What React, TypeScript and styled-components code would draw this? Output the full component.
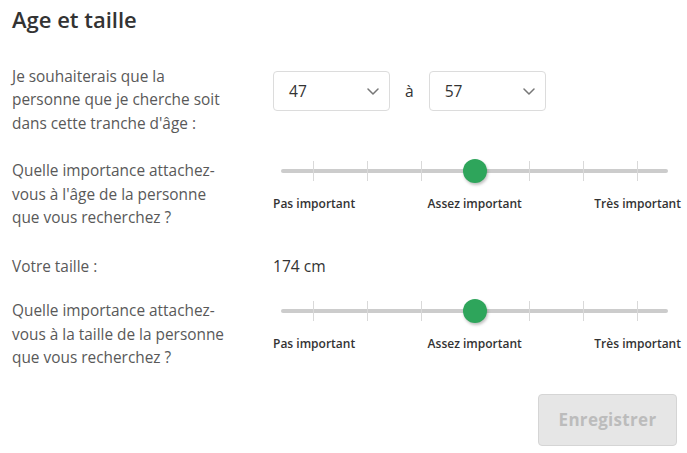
import React from "react";
import styled, { createGlobalStyle } from "styled-components";

const Global = createGlobalStyle`
  html, body { margin: 0; padding: 0; background: #ffffff; }
  body { font-family: "Open Sans", "Liberation Sans", sans-serif; }
`;

const Page = styled.div`
  padding: 0 10px 0 12px;
  width: 687px;
  box-sizing: border-box;
`;

const Title = styled.h2`
  margin: 6px 0 0 0;
  font-size: 22px;
  line-height: 27px;
  font-weight: 600;
  color: #333333;
`;

const Row = styled.div<{ $top: number }>`
  display: grid;
  grid-template-columns: 261px 1fr;
  margin-top: ${(p) => p.$top}px;
`;

const Label = styled.div`
  padding-right: 12px;
  font-size: 15.4px;
  line-height: 23.4px;
  color: #595959;
  white-space: nowrap;
`;

const Field = styled.div<{ $pad?: number }>`
  padding-top: ${(p) => p.$pad ?? 0}px;
  display: flex;
  flex-direction: column;
`;

const SelectGroup = styled.div`
  display: flex;
  align-items: center;
  gap: 15px;
  font-size: 15.6px;
  color: #333333;
`;

const SelectBox = styled.div`
  box-sizing: border-box;
  width: 117px;
  height: 40px;
  border: 1px solid #dcdcdc;
  border-radius: 4px;
  display: flex;
  align-items: center;
  justify-content: space-between;
  padding: 0 10px 0 15px;
  font-size: 15.6px;
  color: #333333;
  background: #fff;
`;

const Value = styled.div`
  font-size: 15.6px;
  line-height: 23.4px;
  color: #333333;
`;

const SliderWrap = styled.div`
  width: 408px;
  display: flex;
  flex-direction: column;
`;

const TrackArea = styled.div`
  position: relative;
  margin-left: 8px;
  width: 387px;
  height: 20px;
`;

const Track = styled.div`
  position: absolute;
  left: 0;
  right: 0;
  top: 8px;
  height: 4px;
  border-radius: 2px;
  background: #cccccc;
`;

const Tick = styled.div`
  position: absolute;
  top: 0;
  width: 1px;
  height: 20px;
  background: #d9d9d9;
`;

const Thumb = styled.div`
  position: absolute;
  top: -2px;
  width: 24px;
  height: 24px;
  margin-left: -12px;
  border-radius: 50%;
  background: #2ea55b;
  box-shadow: 1px 2px 3px rgba(0, 0, 0, 0.25);
`;

const ScaleLabels = styled.div`
  margin-top: 15px;
  display: flex;
  justify-content: space-between;
  font-size: 12px;
  line-height: 16px;
  font-weight: 600;
  color: #333333;
`;

const Actions = styled.div`
  display: flex;
  justify-content: flex-end;
  margin-top: 24px;
`;

const SaveButton = styled.button`
  box-sizing: border-box;
  width: 139px;
  height: 52px;
  border: 1px solid #d5d5d5;
  border-radius: 4px;
  background: #e6e6e6;
  color: #bcbcbc;
  font-family: "Open Sans", "Liberation Sans", sans-serif;
  font-size: 17px;
  font-weight: 700;
  letter-spacing: 0.3px;
  cursor: not-allowed;
`;

const Chevron = () => (
  <svg width="12" height="7" viewBox="0 0 12 7" fill="none">
    <path d="M1 1 L6 6 L11 1" stroke="#777" strokeWidth="1.5" strokeLinecap="round" strokeLinejoin="round" />
  </svg>
);

const Select = ({ value }: { value: string }) => (
  <SelectBox>
    <span>{value}</span>
    <Chevron />
  </SelectBox>
);

const ticks = [32.3, 86.3, 140.3, 194.3, 248.3, 302.3, 356.3];

const ImportanceSlider = ({ value }: { value: number }) => (
  <SliderWrap>
    <TrackArea>
      <Track />
      {ticks.map((t) => (
        <Tick key={t} style={{ left: `${t}px` }} />
      ))}
      <Thumb style={{ left: `${value}px` }} />
    </TrackArea>
    <ScaleLabels>
      <span>Pas important</span>
      <span>Assez important</span>
      <span>Très important</span>
    </ScaleLabels>
  </SliderWrap>
);

const Lines = ({ lines }: { lines: string[] }) => (
  <Label>
    {lines.map((l, i) => (
      <React.Fragment key={i}>
        {i > 0 && <br />}
        {l}
      </React.Fragment>
    ))}
  </Label>
);

export default function App() {
  return (
    <Page>
      <Global />
      <Title>Age et taille</Title>
      <Row $top={32}>
        <Lines lines={["Je souhaiterais que la", "personne que je cherche soit", "dans cette tranche d'âge :"]} />
        <Field $pad={6}>
          <SelectGroup>
            <Select value="47" />
            <span>à</span>
            <Select value="57" />
          </SelectGroup>
        </Field>
      </Row>
      <Row $top={24}>
        <Lines lines={["Quelle importance attachez-", "vous à l'âge de la personne", "que vous recherchez ?"]} />
        <Field $pad={1.5}>
          <ImportanceSlider value={194.3} />
        </Field>
      </Row>
      <Row $top={25.5}>
        <Lines lines={["Votre taille :"]} />
        <Field>
          <Value>174 cm</Value>
        </Field>
      </Row>
      <Row $top={21}>
        <Lines lines={["Quelle importance attachez-", "vous à la taille de la personne", "que vous recherchez ?"]} />
        <Field $pad={1.8}>
          <ImportanceSlider value={194.3} />
        </Field>
      </Row>
      <Actions>
        <SaveButton disabled>Enregistrer</SaveButton>
      </Actions>
    </Page>
  );
}
